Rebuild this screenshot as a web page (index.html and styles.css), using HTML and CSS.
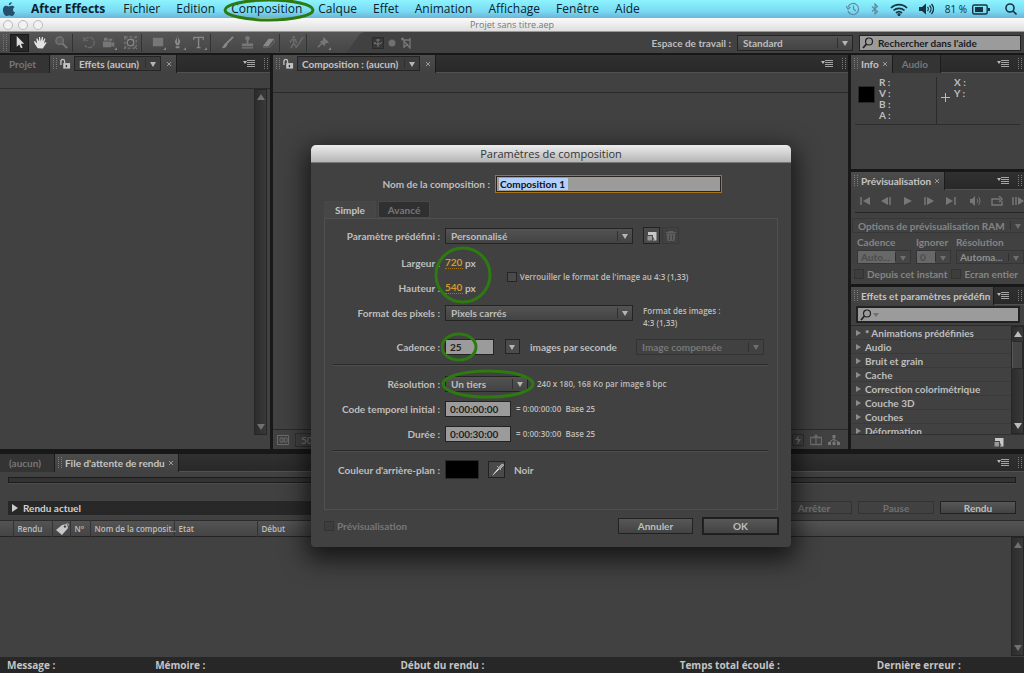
FILE: index.html
```html
<!DOCTYPE html>
<html lang="fr">
<head>
<meta charset="utf-8">
<title>Projet sans titre.aep</title>
<link rel="stylesheet" href="styles.css">
</head>
<body>
<svg class="defs" aria-hidden="true">
  <symbol id="menu" viewBox="0 0 12 8"><path d="M0 1h4L2 4z" fill="#bbb"/><path d="M4 .5h8M4 2.500h8M4 4.500h8M4 6.500h8" stroke="#a4a4a4"/></symbol>
  <symbol id="grip" viewBox="0 0 4 11"><path d="M.5 0v11M3.500 0v11" stroke="#7c7c7c" stroke-dasharray="1 1"/></symbol>
  <symbol id="lock" viewBox="0 0 12 12"><path d="M1 7V3a2 2 0 0 1 4 0v2" fill="none" stroke="#c4c4c4" stroke-width="1.400"/><path d="M3.500 5H11v6H3.500z" fill="#c4c4c4"/><path d="M7 7v2.500" stroke="#333" stroke-width="1.500"/></symbol>
  <symbol id="lens" viewBox="0 0 12 12"><circle cx="7" cy="4.500" r="3.500" fill="none" stroke="#222" stroke-width="1.200"/><path d="M4.500 7L1 11" stroke="#222" stroke-width="1.800"/></symbol>
  <symbol id="new" viewBox="0 0 10 10"><path d="M1 1h8.500v8.500H6V4H1z" fill="#c8c8c8"/><path d="M.5 5H5v4.500H.5z" fill="#999"/><path d="M5 4.500L7 9" stroke="#555"/></symbol>
  <symbol id="x" viewBox="0 0 6 6"><path d="M1 1l4 4M5 1L1 5" stroke="#999"/></symbol>
</svg>
<div class="app">
  <header class="menubar">
    <svg class="apple" viewBox="0 0 14 16"><path d="M10 0c0 2-1.500 3.500-3.200 3.500C6.700 1.700 8.200.3 10 0zM3.600 4c1.300 0 2 .7 3.100.7S8.900 4 10.200 4c1.100 0 2.100.6 2.700 1.500-2.300 1.400-2 4.600.5 5.600-.7 1.900-1.900 3.900-3.300 3.900-1 0-1.400-.7-2.800-.7s-1.800.7-2.800.7C2.700 15 .5 11.600.5 8.500.5 5.700 2 4 3.600 4z" fill="#25506b"/></svg>
    <nav>
      <button class="strong">After Effects</button><button>Fichier</button><button>Edition</button><button class="mark">Composition<svg class="ring ring-menu" viewBox="0 0 92 24"><ellipse cx="46" cy="12" rx="44" ry="10"/></svg></button><button>Calque</button><button>Effet</button><button>Animation</button><button>Affichage</button><button>Fenêtre</button><button>Aide</button>
    </nav>
    <div class="tray">
      <svg width="14" height="14" viewBox="0 0 14 14" fill="none" stroke="#5e8b9d" stroke-width="1.200"><path d="M2 5a5.500 5.500 0 1 1 0 4M0 4l2 3 2.500-2M7.500 3.500V7l2.500 2"/></svg>
      <svg width="8" height="12" viewBox="0 0 8 12" fill="none" stroke="#5e8b9d" stroke-width="1.200"><path d="M1 3.500l5.500 5L4 11V1l2.500 2.500L1 8.500"/></svg>
      <svg width="18" height="13" viewBox="0 0 18 13" fill="none" stroke="#183440" stroke-width="1.700"><path d="M1 5a11 11 0 0 1 16 0M3.500 7.500a8 8 0 0 1 11 0M6 10a4.500 4.500 0 0 1 6 0"/><circle cx="9" cy="11.500" r=".7"/></svg>
      <svg width="15" height="12" viewBox="0 0 15 12" fill="none" stroke="#183440" stroke-width="1.300"><path d="M0 4h3l4-3.500v11L3 8H0z" fill="#183440" stroke="none"/><path d="M8.500 4c1 1 1 3 0 4M10.500 2.500c2 2 2 5 0 7M12.500 1c2.500 3 2.500 7 0 10"/></svg>
      <span>81 %</span>
      <svg width="18" height="11" viewBox="0 0 18 11"><rect x=".7" y="1" width="14.500" height="9" rx="1.500" fill="none" stroke="#183440" stroke-width="1.400"/><path d="M3 3h8v5H3zM16 4h2v3h-2z" fill="#183440"/></svg>
      <svg class="spot" width="12" height="12" viewBox="0 0 12 12" fill="none" stroke="#183440" stroke-width="1.600"><circle cx="5" cy="5" r="4"/><path d="M8 8l3.500 3.500"/></svg>
    </div>
  </header>
  <div class="titlebar"><i></i><i></i><i></i><span>Projet sans titre.aep</span></div>
  <div class="toolbar">
    <div class="tools">
      <svg class="grip" width="4" height="17"><path d="M.5 0v17M3.500 0v17" stroke="#777" stroke-dasharray="1 1"/></svg>
      <button class="on" aria-label="Sélection"><svg viewBox="0 0 16 16"><path d="M5 1v11.500l2.700-2.300 1.800 4 1.800-.8-1.800-4H13z" fill="#ddd"/></svg></button>
      <button aria-label="Main"><svg viewBox="0 0 16 16"><path d="M5 14L2 9.500 1 7l1-.5L4.500 9 3.500 4l1-.5L6.500 7 6.300 2h1.200l.8 5L9.500 2h1.200L10.500 7l1.700-3.500 1 .5-1.500 5 2-1.500.8.700L12 12l-1.500 2.500z" fill="#e3e3e3"/></svg></button>
      <button aria-label="Zoom"><svg viewBox="0 0 16 16"><circle cx="6" cy="6" r="4" fill="#5c5c5c" stroke="#777" stroke-width="1.300"/><path d="M9 9l5 5" stroke="#777" stroke-width="2.200"/></svg></button>
      <button class="sep" aria-label="Rotation"><svg viewBox="0 0 16 16"><path d="M3 5a5.500 5.500 0 1 1 0 6M2 2v4h4" fill="none" stroke="#6d6d6d" stroke-width="1.300" stroke-dasharray="5 1"/></svg></button>
      <button aria-label="Caméra"><svg viewBox="0 0 16 16"><path d="M1 7h9v6H1zM10 9l3-2v6l-3-2zM2 3h4v3H2zM7 4h4v2H7z" fill="#777"/><path d="M16 13v3h-3z" fill="#888"/></svg></button>
      <button aria-label="Déplacement"><svg viewBox="0 0 16 16"><rect x="2" y="2" width="12" height="12" fill="none" stroke="#858585" stroke-dasharray="3 2"/><circle cx="8" cy="8" r="3.500" fill="none" stroke="#888" stroke-width="1.400"/><path d="M1 1l4 4M15 1l-4 4M1 15l4-4M15 15l-4-4" stroke="#777"/></svg></button>
      <button class="sep" aria-label="Forme"><svg viewBox="0 0 16 16"><path d="M2 3h11v9H2z" fill="#777"/><path d="M16 13v3h-3z" fill="#888"/></svg></button>
      <button aria-label="Plume"><svg viewBox="0 0 16 16"><path d="M7 1l3 6-1.500 4h-3L4 7zM5 12h4v2H5z" fill="#888"/><path d="M7 2v6" stroke="#444"/><path d="M16 13v3h-3z" fill="#888"/></svg></button>
      <button aria-label="Texte"><svg viewBox="0 0 16 16"><path d="M2 5V2.500h10V5M7 3v11M5 13.500h4" fill="none" stroke="#888" stroke-width="1.500"/><path d="M16 13v3h-3z" fill="#888"/></svg></button>
      <button class="sep" aria-label="Pinceau"><svg viewBox="0 0 16 16"><path d="M14 2L7 9" stroke="#888" stroke-width="2"/><path d="M7 8l1 2c-1 3-3 4-6 4 2-2 2-5 5-6z" fill="#888"/></svg></button>
      <button aria-label="Tampon"><svg viewBox="0 0 16 16"><circle cx="8" cy="3.500" r="2.500" fill="#777"/><path d="M7 5h2v4h5v3H2V9h5zM2 13h12v1.500H2z" fill="#777"/></svg></button>
      <button aria-label="Gomme"><svg viewBox="0 0 16 16"><path d="M8 4h6l-6 8H2z" fill="#888"/><path d="M14 5v3l-5 5H2" fill="none" stroke="#6d6d6d"/></svg></button>
      <button class="sep" aria-label="Roto-pinceau"><svg viewBox="0 0 16 16"><circle cx="5" cy="2.500" r="1.500" fill="#6d6d6d"/><path d="M1 8l2-3h4l1 4M5 5v4l-3 5M5 9l3 4M15 2l-5 8-3 4" fill="none" stroke="#6d6d6d" stroke-width="1.500"/></svg></button>
      <button class="sep" aria-label="Marionnette"><svg viewBox="0 0 16 16"><path d="M8 2l6 6-2 .5-2 .5-1 3-5-5 3-1z" fill="#777"/><path d="M6 9l-4 4" stroke="#777" stroke-width="1.500"/><path d="M16 13v3h-3z" fill="#888"/></svg></button>
    </div>
    <div class="axes">
      <svg viewBox="0 0 12 12"><path d="M.5.5h11v11H.5z" fill="#383838" stroke="#2c2c2c"/><path d="M6 2v8M2 5l2 2h4l2-2M2 7l2-1M4 3h4" fill="none" stroke="#777"/></svg>
      <svg viewBox="0 0 12 12"><circle cx="6" cy="6" r="3.500" fill="#707070"/></svg>
      <svg viewBox="0 0 12 12"><path d="M1 2h3M2.500.5v3M4 3h6M10 1v10L4 4v7M4 10l4-3" fill="none" stroke="#777" stroke-width="1.300"/></svg>
    </div>
    <label for="workspace">Espace de travail :</label>
    <div class="select ws"><select id="workspace"><option>Standard</option></select></div>
    <div class="search help"><svg><use href="#lens"/></svg><input aria-label="Rechercher dans l'aide" value="Rechercher dans l'aide"></div>
  </div>

  <main class="work">
    <section class="panel">
      <div class="tabs"><button class="tab first">Projet</button>
        <div class="tab active"><svg class="gr"><use href="#grip"/></svg><svg class="lk"><use href="#lock"/></svg><div class="select mini"><select aria-label="Effets"><option>Effets (aucun)</option></select></div><svg class="cl"><use href="#x"/></svg></div>
        <svg class="mn"><use href="#menu"/></svg><svg class="gr end"><use href="#grip"/></svg></div>
      <div class="strip"></div>
      <div class="scrollarea"><div class="scroll"><i class="up"></i><i class="down"></i></div></div>
    </section>
    <section class="panel">
      <div class="tabs">
        <div class="tab active"><svg class="gr"><use href="#grip"/></svg><svg class="lk"><use href="#lock"/></svg><div class="select mini"><select aria-label="Composition"><option>Composition : (aucun)</option></select></div><svg class="cl"><use href="#x"/></svg></div>
        <svg class="mn"><use href="#menu"/></svg><svg class="gr end"><use href="#grip"/></svg></div>
      <div class="strip tall"></div>
      <div class="viewer"></div>
      <div class="viewbar"><svg viewBox="0 0 12 12"><path d="M.5 1.500h11v9H.5zM3 4h3v4H3zM7 4h3v4H7z" fill="none" stroke="#6b6b6b"/></svg><span>50 %</span>
        <svg class="right" viewBox="0 0 12 12"><path d="M.5.5h11v11H.5z" fill="none" stroke="#303030"/><path d="M7 1L3 6h3l-1 5 4-6H6z" fill="#777"/></svg>
        <svg viewBox="0 0 12 12"><path d="M.5 3.500h11v7H.5zM6 1v9M3.500 4L6 1l2.500 3" fill="none" stroke="#6b6b6b" stroke-width="1.300"/></svg>
        <svg viewBox="0 0 12 12"><path d="M4.500 1h3v3h-3zM0 8h3v3H0zM4.500 8h3v3h-3zM9 8h3v3H9z" fill="#777"/><path d="M6 3v5M1.500 8l4-3 5 3" fill="none" stroke="#777"/></svg></div>
    </section>
    <div class="side">
      <section class="panel info">
        <div class="tabs"><div class="tab active"><svg class="gr"><use href="#grip"/></svg>Info<svg class="cl"><use href="#x"/></svg></div><button class="tab audio">Audio</button><svg class="mn"><use href="#menu"/></svg><svg class="gr end"><use href="#grip"/></svg></div>
        <div class="readout"><span class="chip"></span><div class="rgba"><span>R :</span><span>V :</span><span>B :</span><span>A :</span></div><svg viewBox="0 0 9 9"><path d="M4.500 0v9M0 4.500h9" stroke="#bbb"/></svg><div class="xy"><span>X :</span><span>Y :</span></div></div>
      </section>
      <section class="panel preview">
        <div class="tabs"><div class="tab active"><svg class="gr"><use href="#grip"/></svg>Prévisualisation<svg class="cl"><use href="#x"/></svg></div><svg class="mn"><use href="#menu"/></svg><svg class="gr end"><use href="#grip"/></svg></div>
        <div class="transport">
          <button aria-label="Début"><svg viewBox="0 0 12 10"><path d="M2 1v8" stroke="#777" stroke-width="1.500"/><path d="M11 1v8L4 5z"/></svg></button>
          <button aria-label="Image précédente"><svg viewBox="0 0 12 10"><path d="M8 1v8L1 5z"/><path d="M10 1v8" stroke="#777" stroke-width="1.500"/></svg></button>
          <button aria-label="Lecture"><svg viewBox="0 0 12 10"><path d="M2 1v8l8-4z"/></svg></button>
          <button aria-label="Image suivante"><svg viewBox="0 0 12 10"><path d="M2 1v8" stroke="#777" stroke-width="1.500"/><path d="M4 1v8l7-4z"/></svg></button>
          <button aria-label="Fin"><svg viewBox="0 0 12 10"><path d="M1 1v8l7-4z"/><path d="M10 1v8" stroke="#777" stroke-width="1.500"/></svg></button>
          <button class="snd" aria-label="Son"><svg viewBox="0 0 12 10"><path d="M1 3h2l3-3v10L3 7H1z"/><path d="M8 3c1 1 1 3 0 4M9.500 1c2 2 2 6 0 8" fill="none" stroke="#777"/></svg></button>
          <button aria-label="Boucle"><svg viewBox="0 0 12 10"><path d="M4 3H1v6h10V5M3 3h6M8 0l3 3-3 3" fill="none" stroke="#777" stroke-width="1.400"/></svg></button>
          <button aria-label="Prévisualisation RAM"><svg viewBox="0 0 12 10"><path d="M1 1v8M4 1v8" stroke="#777" stroke-width="1.500"/><path d="M6 1v8l6-4z"/></svg></button>
        </div>
        <div class="select ram"><select aria-label="Options" disabled><option>Options de prévisualisation RAM</option></select></div>
        <div class="fields">
          <label for="p1">Cadence</label><label for="p2">Ignorer</label><label for="p3">Résolution</label>
          <div class="select dim"><select id="p1" disabled><option>Auto...</option></select></div><div class="select dim"><select id="p2" disabled><option>0</option></select></div><div class="select off"><select id="p3" disabled><option>Automa...</option></select></div>
        </div>
        <div class="checks"><label><input type="checkbox" disabled>Depuis cet instant</label><label><input type="checkbox" disabled>Ecran entier</label></div>
      </section>
      <section class="panel effects">
        <div class="tabs"><div class="tab active"><svg class="gr"><use href="#grip"/></svg><span class="clip">Effets et paramètres prédéfin</span></div><svg class="mn"><use href="#menu"/></svg><svg class="gr end"><use href="#grip"/></svg></div>
        <div class="search fx"><svg><use href="#lens"/></svg><i class="down"></i><input aria-label="Rechercher un effet"></div>
        <div class="tree"><ul><li>* Animations prédéfinies</li><li>Audio</li><li>Bruit et grain</li><li>Cache</li><li>Correction colorimétrique</li><li>Couche 3D</li><li>Couches</li><li>Déformation</li></ul><div class="scroll bright"><i class="up"></i><b></b><i class="down"></i></div></div>
        <div class="foot"><svg><use href="#new"/></svg></div>
      </section>
    </div>
  </main>

  <section class="panel queue">
    <div class="tabs"><button class="tab first">(aucun)</button><div class="tab active"><svg class="gr"><use href="#grip"/></svg>File d'attente de rendu<svg class="cl"><use href="#x"/></svg></div><svg class="mn"><use href="#menu"/></svg><svg class="gr end"><use href="#grip"/></svg></div>
    <div class="progress"></div>
    <div class="current"><div class="curbar"><i></i>Rendu actuel</div><button class="btn" disabled>Arrêter</button><button class="btn" disabled>Pause</button><button class="btn">Rendu</button></div>
    <table><tr><th class="c0"></th><th class="c1">Rendu</th><th class="c2"><svg viewBox="0 0 14 12"><path d="M1 7l6-5 5-1 1 4-6 7z" fill="#c8c8c8"/><circle cx="10" cy="3.500" r="1.200" fill="#444"/><path d="M10 3c1-3 4-3 4 0" fill="none" stroke="#aaa"/></svg></th><th class="c3">N°</th><th class="c4">Nom de la composit..</th><th class="c5">Etat</th><th>Début</th></tr></table>
    <div class="scrollarea"><div class="scroll"><i class="up"></i><i class="down"></i></div></div>
  </section>
  <footer class="status"><span>Message :</span><span>Mémoire :</span><span>Début du rendu :</span><span>Temps total écoulé :</span><span>Dernière erreur :</span></footer>
</div>

<form class="dialog" role="dialog" aria-labelledby="dt">
  <h1 id="dt">Paramètres de composition</h1>
  <div class="namerow"><label for="nm">Nom de la composition :</label><div class="namebox"><span class="sel"><input id="nm" value="Composition 1"></span></div></div>
  <div class="dtabs"><button type="button" class="cur">Simple</button><button type="button">Avancé</button></div>
  <div class="sheet">
    <div class="row"><label for="f1">Paramètre prédéfini :</label><div class="select wide"><select id="f1"><option>Personnalisé</option></select></div><button type="button" class="sq" aria-label="Nouveau"><svg><use href="#new"/></svg></button><button type="button" class="sq off" aria-label="Supprimer" disabled><svg viewBox="0 0 10 10"><path d="M0 1.500h10M3 1V0h4v1M1 3h8L8 10H2z" fill="#5e5e5e" stroke="#5e5e5e"/><path d="M3.500 4v5M6.500 4v5" stroke="#444"/></svg></button></div>
    <div class="size">
      <div class="mark">
        <div class="row"><label for="f2">Largeur :</label><input id="f2" class="hot" value="720"><span>px</span></div>
        <div class="row"><label for="f3">Hauteur :</label><input id="f3" class="hot" value="540"><span>px</span></div>
        <svg class="ring ring-size" viewBox="0 0 58 58"><circle cx="29" cy="29" r="27"/></svg>
      </div>
      <label class="small lockratio"><input type="checkbox">Verrouiller le format de l'image au 4:3 (1,33)</label>
    </div>
    <div class="row"><label for="f4">Format des pixels :</label><div class="select wide"><select id="f4"><option>Pixels carrés</option></select></div><p class="small ratio">Format des images :<br>4:3 (1,33)</p></div>
    <div class="row rate"><label for="f5">Cadence :</label><div class="mark"><input id="f5" class="box fps" value="25"><svg class="ring ring-fps" viewBox="0 0 37 30"><ellipse cx="18" cy="15" rx="17" ry="13"/></svg></div><button type="button" class="drop" aria-label="Cadences"></button><span>images par seconde</span><div class="select off drop-frame"><select aria-label="Image" disabled><option>Image compensée</option></select></div></div>
    <hr>
    <div class="row"><label for="f6">Résolution :</label><div class="mark"><div class="select res"><select id="f6"><option>Un tiers</option></select></div><svg class="ring ring-res" viewBox="0 0 94 30"><ellipse cx="47" cy="15" rx="45" ry="13"/></svg></div><span class="small resnote">240 x 180, 168 Ko par image 8 bpc</span></div>
    <div class="row"><label for="f7">Code temporel initial :</label><input id="f7" class="box time" value="0:00:00:00"><span class="small">= 0:00:00:00 &nbsp;Base 25</span></div>
    <div class="row"><label for="f8">Durée :</label><input id="f8" class="box time" value="0:00:30:00"><span class="small">= 0:00:30:00 &nbsp;Base 25</span></div>
    <hr>
    <div class="row"><label for="f9">Couleur d'arrière-plan :</label><button type="button" id="f9" class="swatch"></button><button type="button" class="sq eye" aria-label="Pipette"><svg viewBox="0 0 14 14"><path d="M2 12l6-7 1.500 1.500L3 12.500l-2 .5z" fill="#eee" stroke="#222" stroke-width=".6"/><path d="M7 3l4 4M8 5l4-4 2 1-4 4z" stroke="#aaa" fill="#999"/></svg></button><span>Noir</span></div>
  </div>
  <div class="dfoot"><label><input type="checkbox" disabled>Prévisualisation</label><button type="button" class="btn big">Annuler</button><button type="button" class="btn big ok">OK</button></div>
</form>
</body>
</html>
```

FILE: styles.css
```css
* { box-sizing: border-box; }
body { margin: 0; background: #181818; color: #bebebe; font: 700 10px/12px Lato, "Open Sans", sans-serif; overflow: hidden; }
button, input, select { font: inherit; color: inherit; margin: 0; padding: 0; border: 0; background: none; border-radius: 0; outline: 0; }
button, span, label, li { white-space: nowrap; }
svg { display: block; flex: none; }
.defs { position: absolute; width: 0; height: 0; }
.app { height: 100vh; min-height: 600px; display: grid; grid-template-columns: minmax(0, 1fr); grid-template-rows: 18px 14px 23px minmax(0, 394fr) 5px minmax(0, 203fr) 16px; }
.mark { position: relative; }
.ring { position: absolute; fill: none; stroke: #2c7a10; stroke-width: 3; pointer-events: none; z-index: 2; }

.menubar { display: flex; align-items: center; padding: 0 7px 0 2px; background: linear-gradient(#8df3fd, #7adcf5 60%, #6cb4d6); color: #102a36; font-family: "Open Sans", sans-serif; font-size: 12px; font-weight: 400; }
.apple { width: 14px; height: 15px; margin-right: 15px; }
.menubar nav { display: flex; gap: 16px; }
.menubar button { color: #0b222c; line-height: 16px; }
.menubar .strong { font-weight: 700; margin-right: 2px; }
.ring-menu { width: 92px; height: 24px; left: -8px; top: -3px; }
.tray { margin-left: auto; display: flex; align-items: center; gap: 11px; font-size: 10px; }
.tray span { margin-right: -6px; }
.spot { margin-left: 4px; }

.titlebar { display: flex; align-items: center; gap: 5px; padding: 0 3px; background: linear-gradient(#fafafa, #dedede); color: #777; font: 400 9px/12px "Open Sans", sans-serif; border-bottom: 1px solid #999; }
.titlebar i { width: 10px; height: 10px; border: 1px solid #bbb; border-radius: 50%; background: #f2f2f2; }
.titlebar span { flex: 1; text-align: center; padding-right: 45px; }

.toolbar { display: flex; align-items: center; background: #414141; border-bottom: 2px solid #181818; padding-right: 3px; }
.tools { display: flex; align-items: center; align-self: stretch; background: linear-gradient(#555, #464646); padding-right: 31px; clip-path: polygon(0 0, 100% 0, calc(100% - 4px) 2px, calc(100% - 18px) 100%, 0 100%); }
.tools .grip { margin: 0 3px 0 3px; }
.tools button { width: 21px; height: 18px; display: grid; place-items: center; }
.tools button svg { width: 15px; height: 15px; }
.tools .on { width: 19px; background: #272727; border: 1px solid #1a1a1a; margin-right: 1px; }
.tools .sep { width: 27px; padding-left: 6px; border-left: 1px solid #333; }
.axes { display: flex; gap: 2px; margin: 0 auto 0 8px; }
.axes svg { width: 12px; height: 12px; }
.toolbar > label { margin-right: 6px; }

.select { position: relative; display: flex; height: 16px; border: 1px solid #242424; background: linear-gradient(#535353, #434343); flex: none; }
.select select { appearance: none; flex: 1; min-width: 0; width: 100%; padding: 0 16px 0 5px; line-height: 12px; }
.select option { color: #222; }
.select::before { content: ""; position: absolute; right: 14px; top: 2px; bottom: 2px; border-left: 1px solid #303030; pointer-events: none; }
.select::after, .drop::after { content: ""; position: absolute; right: 4px; top: 5px; border: 3px solid transparent; border-top: 5px solid #b5b5b5; border-bottom: 0; pointer-events: none; }
.select select:disabled { color: #777; opacity: 1; }
.ws { width: 116px; margin-right: 6px; }
.search { display: flex; align-items: center; background: #9b9b9b; border: 2px solid #222; color: #1b1b1b; flex: none; }
.search svg { width: 12px; height: 12px; margin-left: 2px; }
.search input { flex: 1; min-width: 0; }
.help { width: 162px; height: 16px; border-width: 1px; }
.help input { padding-left: 4px; }

.work { display: grid; grid-template-columns: minmax(0, 270fr) minmax(0, 575fr) minmax(0, 173fr); gap: 3px; }
.panel { display: flex; flex-direction: column; background: #414141; min-height: 0; min-width: 0; overflow: hidden; }
.tabs { display: flex; align-items: center; height: 18px; flex: none; background: linear-gradient(#303030, #292929); border-bottom: 1px solid #515151; padding-right: 2px; }
.tab { height: 18px; display: flex; align-items: center; padding: 0 13px 0 9px; color: #777; background: #343434; border-right: 1px solid #1c1c1c; flex: none; }
.tab.active { padding: 0 4px 0 3px; color: #c4c4c4; background: linear-gradient(#4c4c4c, #414141); gap: 3px; }
.gr { width: 4px; height: 11px; }
.lk { width: 11px; height: 12px; }
.cl { width: 6px; height: 6px; }
.mn { width: 12px; height: 8px; margin-left: auto; margin-right: 9px; }
.end { margin: 0; }
.mini { height: 15px; background: #3d3d3d; margin-right: 2px; }
.mini select { padding: 0 20px 0 4px; line-height: 12px; }
.strip { height: 16px; border-bottom: 1px solid #2a2a2a; flex: none; }
.tall { height: 20px; }
.scrollarea { flex: 1; min-height: 0; display: flex; justify-content: flex-end; padding: 0 3px 14px 0; }
.scroll { width: 13px; background: linear-gradient(90deg, #2c2c2c, #393939); border: 1px solid #262626; display: flex; flex-direction: column; align-items: center; justify-content: space-between; padding: 4px 0; flex: none; }
i.up { border: 4px solid transparent; border-bottom: 6px solid #707070; border-top: 0; }
i.down { border: 4px solid transparent; border-top: 6px solid #707070; border-bottom: 0; }
.bright i.up { border-bottom-color: #bbb; }
.bright i.down { border-top-color: #bbb; }
.viewer { flex: 1; }
.viewbar { height: 20px; border-top: 1px solid #2a2a2a; display: flex; align-items: center; gap: 6px; padding: 0 8px 0 4px; color: #777; }
.viewbar svg { width: 12px; height: 12px; }
.viewbar span { border: 1px solid #303030; padding: 0 5px; }
.viewbar .right { margin-left: auto; }

.side { display: grid; grid-template-rows: minmax(0, 114fr) minmax(0, 112fr) minmax(0, 162fr); gap: 3px; min-width: 0; min-height: 0; }
.audio { padding: 0 12px 0 9px; }
.readout { display: grid; grid-template-columns: 17px 58px 9px 30px; height: 52px; margin: 0 4px; padding: 4px 0 0 3px; gap: 4px; border-bottom: 1px solid #2c2c2c; flex: none; line-height: 11px; }
.chip { width: 17px; height: 17px; margin-top: 9px; background: #000; border: 1px solid #292929; }
.readout svg { width: 9px; height: 9px; margin-top: 16px; }
.readout div { display: flex; flex-direction: column; }
.rgba { border-right: 1px solid #2b2b2b; }
.transport { display: flex; justify-content: space-between; margin: 0 0 0 4px; padding: 6px 0 6px 4px; border-bottom: 1px solid #252525; flex: none; }
.transport svg { width: 12px; height: 10px; fill: #777; }
.snd { margin-left: 3px; }
.ram { margin: 5px -2px 3px 1px; background: none; border-color: #383838; height: 15px; }
.ram::after, .dim::after, .off::after { border-top-color: #6e6e6e; }
.ram select:disabled { color: #858585; }
.fields { display: grid; grid-template-columns: 54px 35px 68px; column-gap: 5px; padding-left: 6px; color: #858585; flex: none; row-gap: 2px; }
.fields .select { height: 14px; border-color: #353535; }
.fields select { padding: 0 0 0 3px; line-height: 10px; }
.fields .off select { color: #909090; }
.dim { background: linear-gradient(90deg, #686868 calc(100% - 15px), #454545 0); }
.dim select:disabled { color: #4c4c4c; }
.off { background: #414141; border-color: #333; }
.checks { display: flex; gap: 4px; padding: 4px 0 0 3px; color: #858585; }
label input[type=checkbox] { appearance: none; width: 10px; height: 10px; border: 1px solid #252525; background: #4a4a4a; margin-right: 3px; flex: none; }
label input[type=checkbox]:disabled { border-color: #333; background: #3d3d3d; }
.checks label, .dfoot label, .lockratio { display: flex; align-items: center; }
.clip { width: 132px; overflow: hidden; }
.effects .active { padding-right: 0; }
.fx { height: 17px; margin: 1px 4px 2px 5px; }
.fx i { margin-left: 1px; border-width: 4px 3px 0; }
.tree { flex: 1; min-height: 0; display: flex; border-top: 1px solid #2c2c2c; }
.tree ul { flex: 1; margin: 0; padding: 0; list-style: none; overflow: hidden; }
.tree li { display: flex; align-items: center; height: 14px; border-bottom: 1px solid #393939; padding-left: 5px; }
.tree li::before { content: ""; border: 3px solid transparent; border-left: 5px solid #8c8c8c; border-right: 0; margin-right: 4px; }
.tree .scroll { justify-content: flex-start; }
.tree b { width: 11px; height: 28px; margin: 4px 0 auto; background: #444; border: 1px solid #292929; border-left-color: #555; }
.foot { height: 15px; border-top: 1px solid #303030; display: flex; justify-content: flex-end; align-items: center; padding-right: 20px; flex: none; }
.foot svg { width: 10px; height: 10px; }

.queue { grid-row: 6; }
.progress { height: 6px; margin: 5px 8px 17px; background: #333; border: 1px solid #1c1c1c; flex: none; box-shadow: 0 1px #4c4c4c; }
.current { display: flex; align-items: center; gap: 6px; padding: 0 8px; height: 15px; margin-bottom: 5px; flex: none; }
.curbar { flex: 1; height: 14px; display: flex; align-items: center; background: #282828; gap: 5px; padding-left: 4px; color: #d0d0d0; }
.curbar i { border: 4px solid transparent; border-left: 6px solid #ccc; border-right: 0; }
.btn { width: 76px; height: 13px; line-height: 10px; border: 1px solid #222; background: linear-gradient(#575757, #434343); flex: none; }
.btn:disabled { color: #707070; background: #414141; border-color: #333; }
table { width: 100%; table-layout: fixed; border-collapse: collapse; height: 17px; background: linear-gradient(#545454, #444); border-top: 1px solid #2b2b2b; border-bottom: 1px solid #242424; font: 600 8px/12px "Open Sans", sans-serif; flex: none; display: table; }
th { font-weight: 600; text-align: left; padding: 0 0 0 4px; white-space: nowrap; border-left: 1px solid #333; }
th:first-child { border: 0; }
th svg { width: 14px; height: 12px; margin-left: -2px; }
.c0 { width: 13px; } .c1 { width: 39px; } .c2 { width: 18px; } .c3 { width: 20px; } .c4 { width: 84px; } .c5 { width: 83px; }
.queue .scrollarea { padding: 0 0 1px; }
.status { grid-row: 7; display: grid; grid-template-columns: 148fr 245fr 279fr 197fr 147fr; padding-left: 7px; align-items: center; background: #272727; color: #c4c4c4; font-family: "Open Sans", sans-serif; }

.dialog { position: absolute; left: calc(50% - 201px); top: 145px; width: 480px; background: #414141; border-radius: 5px 5px 4px 4px; box-shadow: 0 8px 25px 5px rgba(0,0,0,.65); z-index: 5; padding-bottom: 13px; }
.dialog h1 { margin: 0; height: 18px; font: 400 11px/18px "Open Sans", sans-serif; text-align: center; color: #333; background: linear-gradient(#ececec, #b5b5b5); border-radius: 5px 5px 0 0; border-bottom: 1px solid #777; }
.namerow { display: flex; align-items: center; justify-content: flex-end; gap: 5px; padding: 12px 69px 8px 0; }
.namebox { width: 227px; height: 18px; background: #9b9b9b; border: 1px solid #a87312; box-shadow: inset 0 0 0 1px #2a2520; padding: 2px 3px; }
.sel { display: block; width: 69px; height: 12px; background: #b2d0fb; }
.sel input { display: block; width: 100%; height: 12px; color: #111; padding-left: 1px; }
.dtabs { display: flex; gap: 2px; margin: 0 13px; }
.dtabs button { width: 52px; height: 17px; background: #303030; border: 1px solid #484848; color: #777; }
.dtabs .cur { background: #464646; border-bottom: 0; color: #c4c4c4; }
.sheet { margin: 0 13px; border: 1px solid #505050; padding: 4px 9px 27px 8px; }
.row { display: flex; align-items: center; height: 25px; gap: 5px; }
.row > label { width: 107px; text-align: right; flex: none; }
.wide { width: 188px; margin-right: 5px; }
.sq { width: 17px; height: 17px; display: grid; place-items: center; border: 1px solid #222; background: #4a4a4a; flex: none; margin-right: -3px; }
.sq svg { width: 10px; height: 10px; }
.sq.off { border-color: #393939; background: #414141; }
.size { display: flex; align-items: center; margin-top: 2px; }
.hot { width: 18px; color: #d39a2b; height: 13px; line-height: 12px; border-bottom: 1px dotted #a87312; }
.size .row span { margin-left: -3px; }
.ring-size { width: 58px; height: 58px; left: 101px; top: -4px; }
.small { font: 600 8px/12px "Open Sans", sans-serif; margin: 0; }
.lockratio { margin-left: 31px; padding-top: 4px; }
.ratio { margin-top: 8px; }
.rate { margin: 9px 0 5px; }
.box { display: block; height: 16px; background: #9b9b9b; border: 1px solid #222; color: #222; padding-left: 4px; }
.fps { width: 49px; }
.ring-fps { width: 37px; height: 30px; left: -4px; top: -7px; }
.drop { position: relative; width: 15px; height: 15px; border: 1px solid #242424; background: #4b4b4b; margin: 0 5px 0 6px; }
.drop-frame { width: 128px; margin-left: auto; margin-right: 4px; }
hr { margin: 0; height: 2px; border: 0; border-top: 1px solid #2a2a2a; background: #4d4d4d; }
hr + .row { margin-top: 5px; }
.row + hr { margin-top: 4px; }
.res { width: 83px; }
.ring-res { width: 94px; height: 30px; left: -4px; top: -7px; }
.resnote { margin-left: 4px; }
.time { width: 66px; }
.swatch { width: 34px; height: 19px; background: #000; border: 1px solid #292929; }
.eye { margin: 0 4px; }
.eye svg { width: 14px; height: 14px; }
.dfoot { display: flex; align-items: center; gap: 10px; padding: 8px 13px 0; }
.dfoot label { margin-right: auto; color: #777; }
.big { width: 75px; height: 16px; line-height: 13px; }
.ok { outline: 1px solid #1d1d1d; }
```
